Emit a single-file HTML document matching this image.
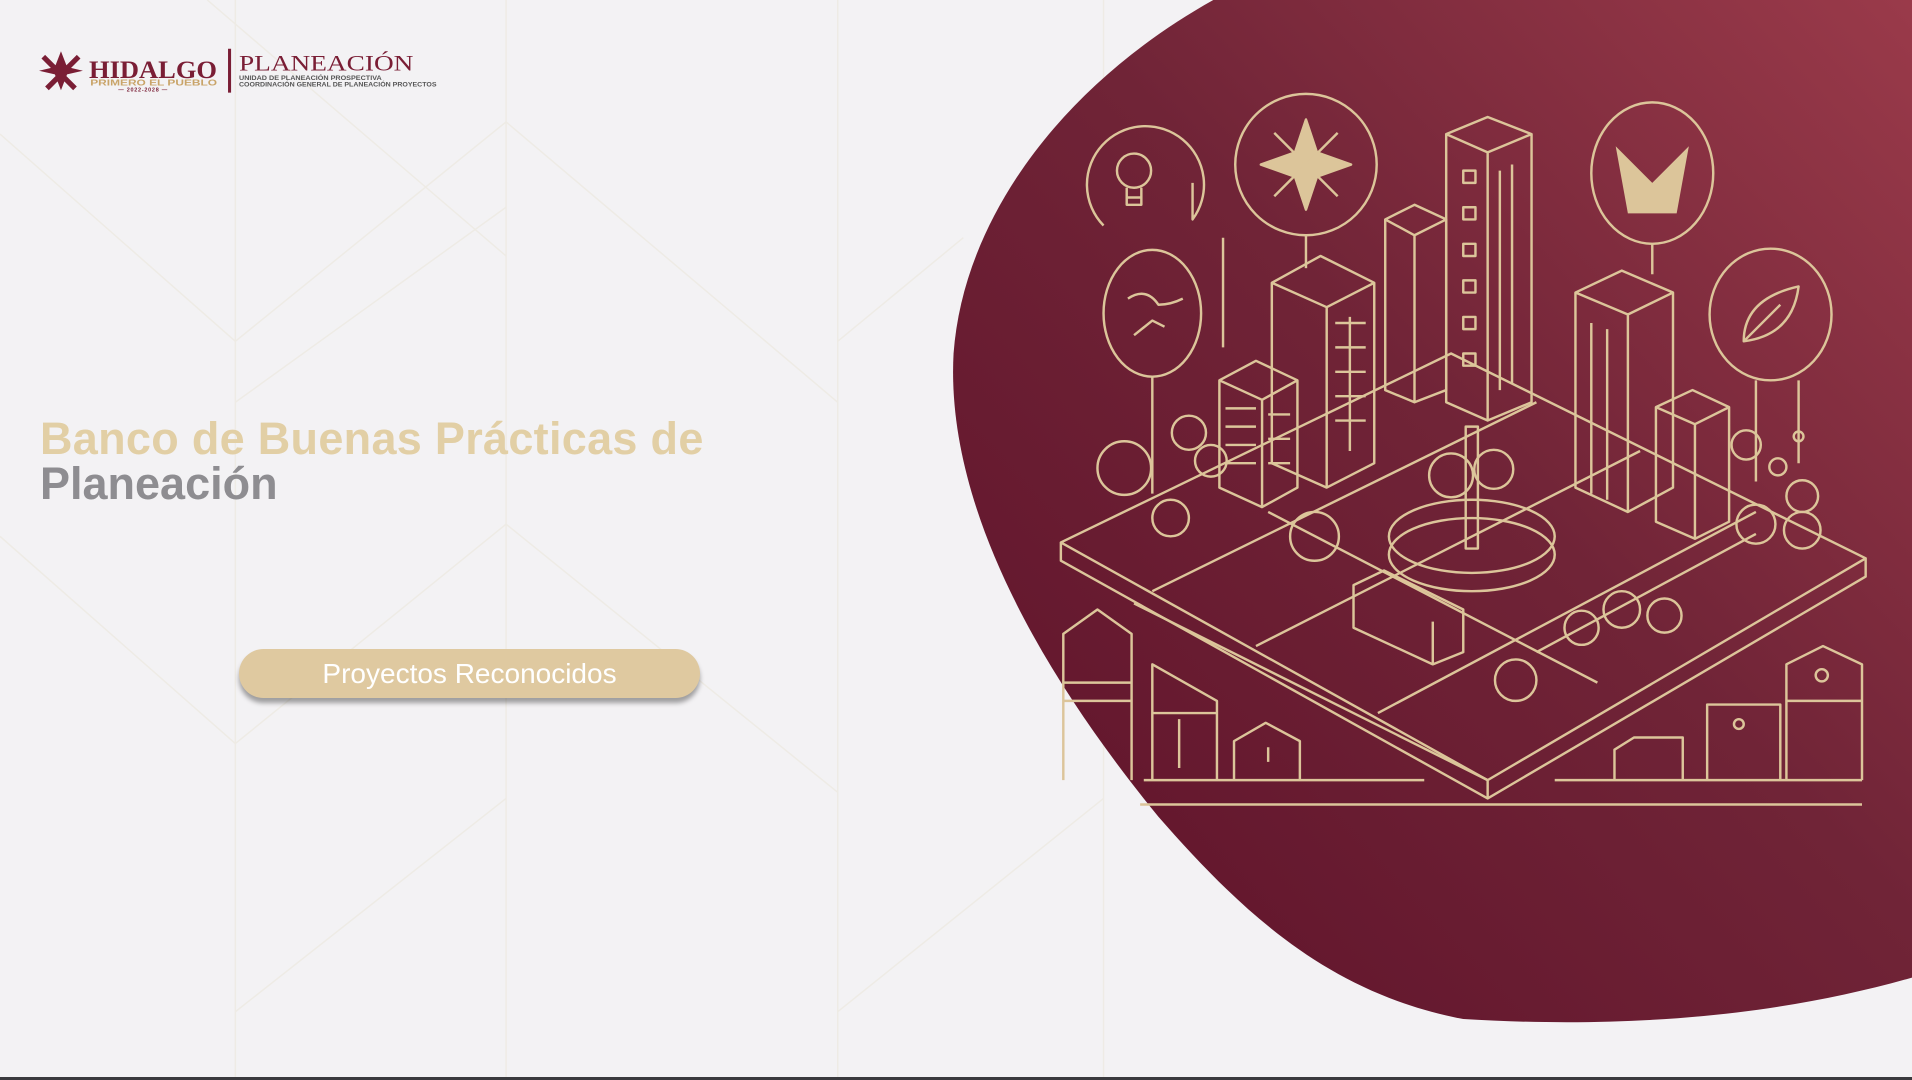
<!DOCTYPE html>
<html><head><meta charset="utf-8"><style>
html,body{margin:0;padding:0;width:1912px;height:1080px;overflow:hidden;}
body{background:#f3f2f4;position:relative;font-family:"Liberation Sans",sans-serif;}
svg.bg{position:absolute;left:0;top:0;display:block;}
.t1{position:absolute;left:40px;top:416px;font-size:45px;font-weight:700;color:#e2cfa5;letter-spacing:0.3px;white-space:nowrap;line-height:46px;}
.t2{position:absolute;left:40px;top:461px;font-size:45px;font-weight:700;color:#8e8d91;white-space:nowrap;line-height:46px;}
.btn{position:absolute;left:239px;top:649px;width:461px;height:49px;border-radius:25px;background:#dfc9a0;color:#fff;font-size:28px;text-align:center;line-height:49px;box-shadow:0 5px 5px rgba(0,0,0,0.35);}
.bot{position:absolute;left:0;top:1077px;width:1912px;height:3px;background:#3a3a3e;}
</style></head><body>
<svg class="bg" width="1912" height="1080" viewBox="0 0 1568 886" preserveAspectRatio="none">
<defs>
<linearGradient id="g" x1="0" y1="1" x2="1" y2="0">
<stop offset="0" stop-color="#5e1129"/><stop offset="0.55" stop-color="#702437"/><stop offset="1" stop-color="#9a3a4a"/>
</linearGradient>
</defs>
<g stroke="#eeebe5" stroke-width="1.2" fill="none">
<line x1="193" y1="0" x2="193" y2="886"/><line x1="415" y1="0" x2="415" y2="886"/>
<line x1="687" y1="0" x2="687" y2="886"/><line x1="905" y1="0" x2="905" y2="886"/>
<line x1="193" y1="280" x2="415" y2="100"/><line x1="193" y1="330" x2="415" y2="170"/>
<line x1="193" y1="830" x2="415" y2="655"/><line x1="193" y1="610" x2="415" y2="430"/>
<line x1="687" y1="280" x2="790" y2="195"/><line x1="687" y1="830" x2="905" y2="655"/>
<line x1="0" y1="110" x2="193" y2="280"/><line x1="0" y1="440" x2="193" y2="610"/>
<line x1="415" y1="430" x2="687" y2="650"/><line x1="415" y1="100" x2="687" y2="330"/>
<line x1="170" y1="0" x2="415" y2="210"/>
</g>
<path d="M995 0 C870 70 790 180 782 290 C775 420 860 560 950 670 C1020 750 1090 815 1200 836 C1350 845 1470 830 1568 802 L1568 0 Z" fill="url(#g)"/>
<g stroke="#dcc59a" stroke-width="2" fill="none" stroke-linejoin="round">
<path d="M905 185 A48 48 0 1 1 978 180 L978 150"/>
<circle cx="930" cy="140" r="14"/><path d="M924 154 v14 h12 v-14 M924 162 h12"/>
<circle cx="1071" cy="135" r="58"/>
<path d="M1071 98 L1080 125 L1108 135 L1080 145 L1071 172 L1062 145 L1034 135 L1062 125Z M1045 109 L1097 161 M1097 109 L1045 161" fill="#dcc59a"/>
<ellipse cx="1355" cy="142" rx="50" ry="58"/>
<path d="M1325 120 L1355 150 L1385 120 L1375 175 L1335 175Z" fill="#dcc59a" stroke="none"/>
<ellipse cx="945" cy="257" rx="40" ry="52"/>
<path d="M925 245 q15 -10 25 5 q10 0 20 -5 M930 275 l15 -12 l10 5"/>
<ellipse cx="1452" cy="258" rx="50" ry="54"/>
<path d="M1430 280 q0 -35 45 -45 q-5 40 -45 45z M1430 280 l30 -30"/>
<line x1="1071" y1="193" x2="1071" y2="220"/><line x1="945" y1="309" x2="945" y2="405"/>
<line x1="1355" y1="200" x2="1355" y2="225"/><line x1="1440" y1="312" x2="1440" y2="395"/>
<line x1="1475" y1="312" x2="1475" y2="380"/><line x1="1003" y1="195" x2="1003" y2="285"/>
<path d="M1186 110 L1220 96 L1256 110 L1256 330 L1220 345 L1186 330Z M1220 345 V125 M1186 110 L1220 125 L1256 110"/>
<path d="M1200 140 h10 v10 h-10z M1200 170 h10 v10 h-10z M1200 200 h10 v10 h-10z M1200 230 h10 v10 h-10z M1200 260 h10 v10 h-10z M1200 290 h10 v10 h-10z M1230 140 v180 M1240 135 v180"/>
<path d="M1136 180 L1160 168 L1186 180 L1186 320 L1160 330 L1136 320Z M1160 330 V193 M1136 180 L1160 193 L1186 180"/>
<path d="M1043 232 L1083 210 L1127 232 L1127 380 L1088 400 L1043 380Z M1088 400 V252 M1043 232 L1088 252 L1127 232"/>
<path d="M1095 265 h25 M1095 285 h25 M1095 305 h25 M1095 325 h25 M1095 345 h25 M1107 260 v110"/>
<path d="M1000 312 L1030 296 L1064 312 L1064 400 L1035 416 L1000 400Z M1035 416 V328 M1000 312 L1035 328 L1064 312"/>
<path d="M1005 335 h25 M1005 350 h25 M1005 365 h25 M1005 380 h25 M1040 340 h18 M1040 360 h18 M1040 380 h18"/>
<path d="M1292 240 L1330 222 L1372 240 L1372 400 L1335 420 L1292 400Z M1335 420 V258 M1292 240 L1335 258 L1372 240 M1305 265 v140 M1318 270 v140"/>
<path d="M1358 334 L1388 320 L1418 334 L1418 428 L1390 442 L1358 428Z M1390 442 V348 M1358 334 L1390 348 L1418 334"/>
<path d="M870 445 L1190 290 L1530 458 L1220 640 Z M870 445 v15 L1220 655 L1530 473 v-15 M1220 640 v15"/>
<path d="M945 485 L1260 330 M1030 530 L1345 370 M1130 585 L1440 420 M930 495 L1220 640 M1040 420 L1310 560 M1260 535 L1440 438"/>
<ellipse cx="1207" cy="440" rx="68" ry="30"/><ellipse cx="1207" cy="455" rx="68" ry="30"/>
<path d="M1202 350 v100 h10 v-100z"/>
<circle cx="1190" cy="390" r="18"/><circle cx="1225" cy="385" r="16"/>
<path d="M1110 480 L1135 468 L1200 500 L1200 535 L1175 545 L1110 515Z M1175 510 v35"/>
<circle cx="922" cy="384" r="22"/><circle cx="960" cy="425" r="15"/><circle cx="1078" cy="440" r="20"/>
<circle cx="975" cy="355" r="14"/><circle cx="993" cy="378" r="13"/><circle cx="1243" cy="558" r="17"/>
<circle cx="1297" cy="515" r="14"/><circle cx="1330" cy="500" r="15"/><circle cx="1365" cy="505" r="14"/>
<circle cx="1440" cy="430" r="16"/><circle cx="1478" cy="435" r="15"/><circle cx="1478" cy="407" r="13"/>
<circle cx="1432" cy="365" r="12"/><circle cx="1458" cy="383" r="7"/><circle cx="1475" cy="358" r="4"/>
<path d="M872 640 V520 L900 500 L928 520 V640 M872 560 h55 M872 575 h55 M945 640 V545 L998 575 V640 M945 585 h53 M967 630 v-40"/>
<path d="M1012 640 V608 L1038 593 L1066 608 V640 M1040 625 v-12"/>
<path d="M1324 640 V615 L1340 605 h40 V640 M1400 640 V578 h60 V640 M1465 640 V545 L1495 530 L1527 545 V640 M1465 575 h62"/>
<circle cx="1494" cy="554" r="5"/><circle cx="1426" cy="594" r="4"/>
<path d="M938 640 H1168 M1275 640 H1527"/>
<line x1="935" y1="660" x2="1527" y2="660"/>
</g>
<g fill="#7a1e35">
<path d="M50 42 L55 55 L68 58 L55 61 L50 74 L45 61 L32 58 L45 55Z"/>
<path d="M37 45 L63 71 L60 74 L34 48Z M63 45 L66 48 L40 74 L37 71Z"/>
</g>
<text x="73" y="64" font-family="Liberation Serif" font-weight="700" font-size="21" fill="#7a1e35" textLength="105" lengthAdjust="spacingAndGlyphs">HIDALGO</text>
<text x="74" y="70" font-family="Liberation Sans" font-weight="700" font-size="6.5" fill="#c9a468" textLength="104" lengthAdjust="spacingAndGlyphs">PRIMERO EL PUEBLO</text>
<text x="97" y="75" font-family="Liberation Sans" font-weight="700" font-size="4.5" fill="#7a1e35" letter-spacing="0.6">— 2022-2028 —</text>
<rect x="187" y="40" width="2.5" height="36" fill="#7a1e35"/>
<text x="196" y="58" font-family="Liberation Serif" font-size="18" fill="#7a1e35" textLength="143" lengthAdjust="spacingAndGlyphs">PLANEACIÓN</text>
<text x="196" y="65.5" font-family="Liberation Sans" font-weight="700" font-size="5" fill="#555" textLength="117" lengthAdjust="spacingAndGlyphs">UNIDAD DE PLANEACIÓN PROSPECTIVA</text>
<text x="196" y="71" font-family="Liberation Sans" font-weight="700" font-size="5" fill="#555" textLength="162" lengthAdjust="spacingAndGlyphs">COORDINACIÓN GENERAL DE PLANEACIÓN PROYECTOS</text>
</svg>
<div class="t1">Banco de Buenas Prácticas de</div>
<div class="t2">Planeación</div>
<div class="btn">Proyectos Reconocidos</div>
<div class="bot"></div>
</body></html>
